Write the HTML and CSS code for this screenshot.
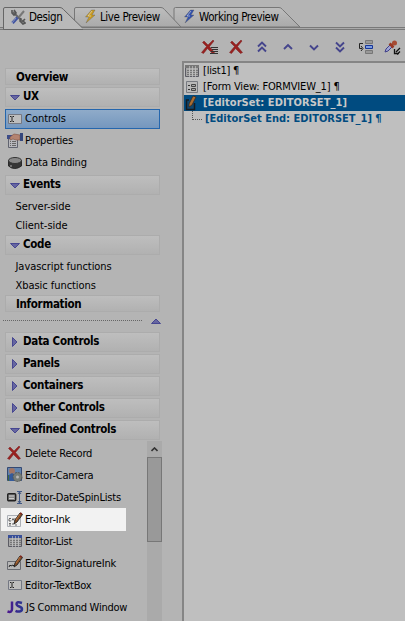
FILE: index.html
```html
<!DOCTYPE html>
<html lang="en">
<head>
<meta charset="utf-8">
<title>UX Designer</title>
<link rel="stylesheet" href="styles.css">
</head>
<body>
<svg class="defs" width="0" height="0">
  <defs>
    <linearGradient id="jsfill" gradientUnits="userSpaceOnUse" x1="0" y1="0" x2="17" y2="0"><stop offset="0" stop-color="#4d168c"/><stop offset="1" stop-color="#283991"/></linearGradient>
    <linearGradient id="tabfill" x2="0" y2="1"><stop offset="0" stop-color="#bdbdbd"/><stop offset="1" stop-color="#aaa"/></linearGradient>
    <symbol id="cross" viewBox="0 0 16 16"><path d="M3 2l4 4 5-5 1 1-4.500 5.500 5 6-2 1-5-5-4 5-2-1 5-6-4-4z" fill="#98201f" stroke="#7b2020" stroke-width=".5"/></symbol>
    <symbol id="bolt" viewBox="0 0 12 16"><path d="M7.500 1h3.500L8 6h3L2 14l3-6H1.500z" fill="currentColor" stroke="#555" stroke-opacity=".5" stroke-width=".7"/><path d="M8 2L4 7h3" stroke="#ddd" fill="none" opacity=".6"/></symbol>
    <symbol id="down" viewBox="0 0 10 6"><path d="M.5.5h9L5 5z" fill="#6666a0" stroke="#35358a" stroke-width=".8"/></symbol>
    <symbol id="right" viewBox="0 0 6 10"><path d="M.5.5v9L5 5z" fill="#6666a0" stroke="#35358a" stroke-width=".8"/></symbol>
    <symbol id="textbox" viewBox="0 0 16 16"><path d="M1.500 3.500h13v9h-13z" fill="#bdbdbd" stroke="#747883"/><path d="M3 5.500h1.500M5.500 5.500H7M5 6v4M3 10.500h1.500M5.500 10.500H7" stroke="#222" fill="none"/></symbol>
    <symbol id="grid" viewBox="0 0 16 16"><path d="M1.500 2.500h13v11h-13z" fill="#a7a7a7" stroke="#5c5c64"/><path d="M1 2h14v3H1z" fill="var(--head)"/><path d="M3 7.500h2m1 0h2m1 0h2m1 0h2M3 9.500h2m1 0h2m1 0h2m1 0h2M3 11.500h2m1 0h2m1 0h2m1 0h2" stroke="#777"/><path d="M5.500 3v11M8.500 3v11M11.500 3v11" stroke="#ccc" stroke-width=".6"/></symbol>
    <symbol id="pencil" viewBox="0 0 16 16"><path d="M7 12l1-4 5-7 2.500 1.500L10 10z" fill="#885029" stroke="#242424" stroke-width=".9"/><path d="M9 8l4-6" stroke="#bb743d"/><path d="M13 1l2 1" stroke="#802a20" stroke-width="1.500"/></symbol>
  </defs>
</svg>
<main class="app">
  <nav class="tabs">
    <svg class="tab-shape" width="405" height="31" viewBox="0 0 405 31">
      <path d="M0 27.500h405M0 29.500h405" stroke="#797979" fill="none"/><path d="M0 28.500h405" stroke="#a9a9a9"/>
      <path d="M174 27V9q0-1.500 1.500-1.500H279q2 0 3.500 2L300 27z" fill="url(#tabfill)" stroke="#777"/>
      <path d="M74.500 27V9q0-1.500 1.500-1.500h85q2 0 3.500 2L181 27z" fill="url(#tabfill)" stroke="#777"/>
      <path d="M3.500 29V9q0-1.500 1.500-1.500h55q2 0 3.500 2L82 27.500V29z" fill="#b9b9b9"/>
      <path d="M3.500 29.500V9q0-1.500 1.500-1.500h55q2 0 3.500 2L82 27.500M3.500 29.500H83" fill="none" stroke="#666"/>
    </svg>
    <span class="tab design"><svg width="16" height="16" viewBox="0 0 16 16"><path d="M3 3l10 10" stroke="#666" stroke-width="2"/><path d="M2 1v3l2 2 2-2-2-3M11 9l-1 3 3 3 2-1-2-2 2-2" fill="none" stroke="#555" stroke-width="1.600"/><path d="M14 2L9 8" stroke="#777" stroke-width="2"/><path d="M7.500 8.500l-5 5.500" stroke="#4053a0" stroke-width="3"/><path d="M6 9l-4 5" stroke="#8794bd"/></svg>Design</span>
    <span class="tab live"><svg width="12" height="16"><use href="#bolt"/></svg>Live Preview</span>
    <span class="tab working"><svg width="12" height="16"><use href="#bolt"/></svg>Working Preview</span>
  </nav>
  <div class="work">
    <aside class="side">
      <section class="top-list">
        <h2 class="short plain"><span>Overview</span></h2>
        <h2 class="ux"><svg width="10" height="6"><use href="#down"/></svg><span>UX</span></h2>
        <div class="item selected"><svg width="16" height="16"><use href="#textbox"/></svg><span class="w-controls">Controls</span></div>
        <div class="item"><svg width="16" height="16" viewBox="0 0 16 16"><path d="M1.500 5.500h9v9h-9z" fill="#b8b8bd" stroke="#60636f"/><path d="M0 2h9v4H0z" fill="#3c4c89"/><path d="M3 8.500h1m1 0h4M3 10.500h1m1 0h4M3 12.500h1m1 0h4" stroke="#666"/><path d="M3 4l4-3 6 1v5H9L6 6 3 7z" fill="#b48370" stroke="#80503f" stroke-width=".6"/><path d="M13 0h3v8h-3z" fill="#34467c"/></svg><span>Properties</span></div>
        <div class="item"><svg width="16" height="16" viewBox="0 0 16 16"><path d="M1.500 5v6q6 5 13 0V5" fill="#363636" stroke="#292929"/><ellipse cx="8" cy="5.500" rx="6.500" ry="3" fill="#888" stroke="#333"/><path d="M4 10v2" stroke="#aaa"/></svg><span>Data Binding</span></div>
      </section>
      <h2><svg width="10" height="6"><use href="#down"/></svg><span>Events</span></h2>
      <ul class="links"><li>Server-side</li><li>Client-side</li></ul>
      <h2><svg width="10" height="6"><use href="#down"/></svg><span>Code</span></h2>
      <ul class="links"><li>Javascript functions</li><li>Xbasic functions</li></ul>
      <h2 class="short plain"><span>Information</span></h2>
      <div class="splitter"><i></i><svg width="10" height="6" viewBox="0 0 10 6"><path d="M.5 5.500h9L5 1z" fill="#6666a0" stroke="#35358a" stroke-width=".8"/></svg></div>
      <section class="groups">
        <h2><svg width="6" height="10"><use href="#right"/></svg><span>Data Controls</span></h2>
        <h2><svg width="6" height="10"><use href="#right"/></svg><span>Panels</span></h2>
        <h2><svg width="6" height="10"><use href="#right"/></svg><span>Containers</span></h2>
        <h2><svg width="6" height="10"><use href="#right"/></svg><span>Other Controls</span></h2>
        <h2><svg width="10" height="6"><use href="#down"/></svg><span>Defined Controls</span></h2>
      </section>
      <div class="defined">
        <div class="items">
          <div class="item"><svg width="16" height="16"><use href="#cross"/></svg><span>Delete Record</span></div>
          <div class="item"><svg width="16" height="16" viewBox="0 0 16 16"><path d="M.5.500h14v13H.5z" fill="#6283ad" stroke="#344973"/><path d="M1 8h13v6H1z" fill="#42683f"/><circle cx="5" cy="4" r="3" fill="#a07565"/><path d="M2 8l3-2 3 2v6H2z" fill="#345b9b"/><circle cx="10.500" cy="10" r="4.500" fill="#777d78" stroke="#555" stroke-dasharray="2 1"/><circle cx="10.500" cy="10" r="1.500" fill="#b5b5b5"/></svg><span>Editor-Camera</span></div>
          <div class="item"><svg width="16" height="16" viewBox="0 0 16 16"><rect x=".7" y="4.700" width="8" height="7" rx="1" fill="#888" stroke="#222" stroke-width="1.400"/><path d="M2 7h5M2 9.500h5" stroke="#ccc"/><path d="M12.500 3v11M10 2.500h5M10 14.500h5M11 5l1.500-2L14 5M11 12l1.500 2 1.500-2" fill="none" stroke="#405784"/></svg><span>Editor-DateSpinLists</span></div>
          <div class="item hot"><svg width="16" height="16" viewBox="0 0 16 16"><path d="M.5 3.500h13v11H.5z" fill="#eee" stroke="#acb0b6"/><path d="M2 6.500h2M2 7v2h2M5 8.500l1-2 1 2M8 6v3M2 11.500h2M2 13h2m1-1h2m1 1h2" fill="none" stroke="#555" stroke-width=".9"/><use href="#pencil"/></svg><span>Editor-Ink</span></div>
          <div class="item blue"><svg width="16" height="16"><use href="#grid"/></svg><span>Editor-List</span></div>
          <div class="item"><svg width="16" height="16" viewBox="0 0 16 16"><path d="M.5 6.500h13v8H.5z" fill="#b6b6b6" stroke="#686a70"/><path d="M2 12l1-2 1 1 2-1 1 1 2-1" fill="none" stroke="#222"/><use href="#pencil"/></svg><span>Editor-SignatureInk</span></div>
          <div class="item"><svg width="16" height="16"><use href="#textbox"/></svg><span>Editor-TextBox</span></div>
          <div class="item"><svg width="17" height="16" viewBox="0 0 17 16"><path d="M5 2.500v7.500q0 4-4.500 2.500M15 4Q9.500 2.200 9.500 5c0 3 5.500 2 5.500 5 0 3-4 3-6.500 1.800" fill="none" stroke="url(#jsfill)" stroke-width="2.500"/></svg><span class="w-command">JS Command Window</span></div>
        </div>
        <div class="scroll"><svg width="7" height="5" viewBox="0 0 7 5"><path d="M.5 4l3-3 3 3" fill="none" stroke="#333" stroke-width="1.600"/></svg><div class="thumb"></div></div>
      </div>
    </aside>
    <section class="content">
      <div class="toolbar">
        <svg width="18" height="18" viewBox="0 0 18 18"><use href="#cross" x="0" y="0" width="16" height="16"/><path d="M10 8.500h7M11 10.500h6M10 12.500h7M9 14.500h8" stroke="#333"/></svg>
        <svg width="18" height="18" viewBox="0 0 18 18"><use href="#cross" x="2" y="0" width="16" height="16"/></svg>
        <svg class="chev" width="18" height="18" viewBox="0 0 18 18"><path d="M5 7.500l4-4 4 4M5 12.500l4-4 4 4"/></svg>
        <svg class="chev" width="18" height="18" viewBox="0 0 18 18"><path d="M5 10l4-4 4 4"/></svg>
        <svg class="chev" width="18" height="18" viewBox="0 0 18 18"><path d="M5 6.500l4 4 4-4"/></svg>
        <svg class="chev" width="18" height="18" viewBox="0 0 18 18"><path d="M5 3.500l4 4 4-4M5 8.500l4 4 4-4"/></svg>
        <svg width="18" height="18" viewBox="0 0 18 18"><path d="M8.500 1.500h7v3h-7zM8.500 11.500h7v3h-7z" fill="#999" stroke="#777"/><path d="M8.500 6.500h7v3h-7z" fill="#7c9ce0" stroke="#153496"/><path d="M6 4.500H2.500v5H5M4 7l2 2.500L4 12" fill="none" stroke="#222"/></svg>
        <svg width="18" height="18" viewBox="0 0 18 18"><path d="M2 13l1-3 4-4 2 2-4 4z" fill="#9ea4d2" stroke="#40408a"/><path d="M6.500 4.500l4 4M8.500 6.500l3-3" stroke="#9a3923" stroke-width="2.500"/><circle cx="11.500" cy="4" r="2.500" fill="#a64b33"/><path d="M17 9l-4 4M11.500 10v4.500H16M14 15.500l3-3" fill="none" stroke="#111" stroke-width="1.300"/></svg>
      </div>
      <div class="tree">
        <div class="node"><svg width="16" height="16"><use href="#grid"/></svg><span class="w-list">[list1] ¶</span></div>
        <div class="node"><svg width="16" height="16" viewBox="0 0 16 16"><path d="M2.500 2.500h11v11h-11z" fill="#b9b9b9" stroke="#777a80"/><path d="M4 6.500h2M4 10.500h2" stroke="#333"/><path d="M7.500 5.500h4v2h-4zM7.500 9.500h4v2h-4z" fill="#aaa" stroke="#444"/></svg><span class="w-form">[Form View: FORMVIEW_1] ¶</span></div>
        <div class="node current"><svg width="16" height="16" viewBox="0 0 16 16"><path d="M5 5H2.500v9.500h8V8" fill="#10466d" stroke="#151b20" stroke-width="1.500"/><path d="M5 9L9 1l3 1-4 8-3 2z" fill="#a96d32" stroke="#33241a" stroke-width=".7"/></svg><span>[EditorSet: EDITORSET_1]</span></div>
        <div class="node end"><i></i><span>[EditorSet End: EDITORSET_1] ¶</span></div>
      </div>
    </section>
  </div>
</main>
</body>
</html>
```
FILE: styles.css
```css
* { box-sizing: border-box; }
body { margin: 0; background: #b4b4b4; color: #000; font: 11px/16px Tahoma, "DejaVu Sans Condensed", "DejaVu Sans", sans-serif; }
.defs { position: absolute; }
.app { width: 405px; height: 621px; overflow: hidden; display: flex; flex-direction: column; }
svg { flex: none; display: block; }
span { white-space: nowrap; }

.tabs { position: relative; height: 31px; display: flex; padding-top: 9px; }
.tab-shape { position: absolute; left: 0; top: 0; }
.tab { position: relative; display: flex; height: 16px; letter-spacing: -.4px; font-size: 11.500px; }
.design { margin-left: 10px; width: 74px; gap: 3px; }
.live { width: 99px; gap: 4px; }
.working { gap: 4px; }
.live svg { color: #c99b20; }
.working svg { color: #3150ad; }

.work { flex: 1; display: flex; min-height: 0; }
.side { width: 182px; padding: 37px 0 0 5px; }
h2 { display: flex; align-items: center; width: 155px; height: 20px; margin: 0; border: 1px solid #acacac; background: linear-gradient(#bebebe, #b1b1b1); font-size: 11.500px; font-weight: bold; line-height: 16px; letter-spacing: -.3px; }
h2 span { padding-bottom: 2px; }
h2 svg { margin: 1px 3px 0 4px; }
h2 svg[width="6"] { margin: 0 5px 1px 6px; }
h2.short { height: 17px; }
h2.plain { padding-left: 10px; }
h2.plain span { padding-bottom: 0; }
h2.ux { margin-top: 2px; }
.top-list { height: 107px; }
.item { display: flex; align-items: center; gap: 2px; width: 155px; height: 22px; padding-left: 2px; letter-spacing: -.2px; }
.item.selected { height: 20px; margin: 2px 0 1px; padding-left: 1px; border: 1px solid #2566ad; background: linear-gradient(#8fabc9, #7597be); }
.w-controls { letter-spacing: 0; }
.links { list-style: none; margin: 0; padding: 2px 0 0 10.500px; height: 40px; line-height: 19px; letter-spacing: -.05px; }
.splitter { display: flex; align-items: center; justify-content: space-between; width: 157px; height: 20px; margin-left: -1px; padding-bottom: 3px; }
.splitter i { width: 139px; border-top: 1px dotted #666; margin-left: -1px; }
.groups { display: flex; flex-direction: column; gap: 2px; }
.defined { display: flex; justify-content: space-between; width: 157px; height: 180px; margin-top: 1px; }
.items { padding-top: 1px; width: 122px; }
.items .item { width: 122px; }
.items .item.hot { width: 125px; margin: 0 0 -1px -4px; padding-left: 6px; background: #f2f2f2; height: 23px; }
.items .item span { padding-top: 1px; }
.w-command { letter-spacing: -.25px; }
.blue { --head: #384f99; }
.scroll { width: 15px; background: #aaa; display: flex; flex-direction: column; }
.scroll svg { margin: 6px 4px 5px; }
.thumb { height: 85px; border: 1px solid #777; background: #999; }

.content { flex: 1; display: flex; flex-direction: column; }
.toolbar { height: 30px; display: flex; gap: 8px; padding: 8px 0 0 19px; }
.chev { fill: none; stroke: #45458c; stroke-width: 1.900; }
.tree { --head: #777; flex: 1; border: 2px solid #858585; border-width: 2px 0 0 2px; background: #bfbfbf; }
.node { height: 16px; display: flex; gap: 3px; line-height: 15px; letter-spacing: -.2px; }
.w-form { letter-spacing: -.15px; }
.node.current { background: #004b80; color: #c8c8c8; font-weight: bold; letter-spacing: .06px; }
.node.end { color: #004b80; font-weight: bold; letter-spacing: 0; }
.node.end i { width: 10px; height: 9px; margin: 0 0 0 8px; border: dotted #555; border-width: 0 0 1px 1px; }
```
